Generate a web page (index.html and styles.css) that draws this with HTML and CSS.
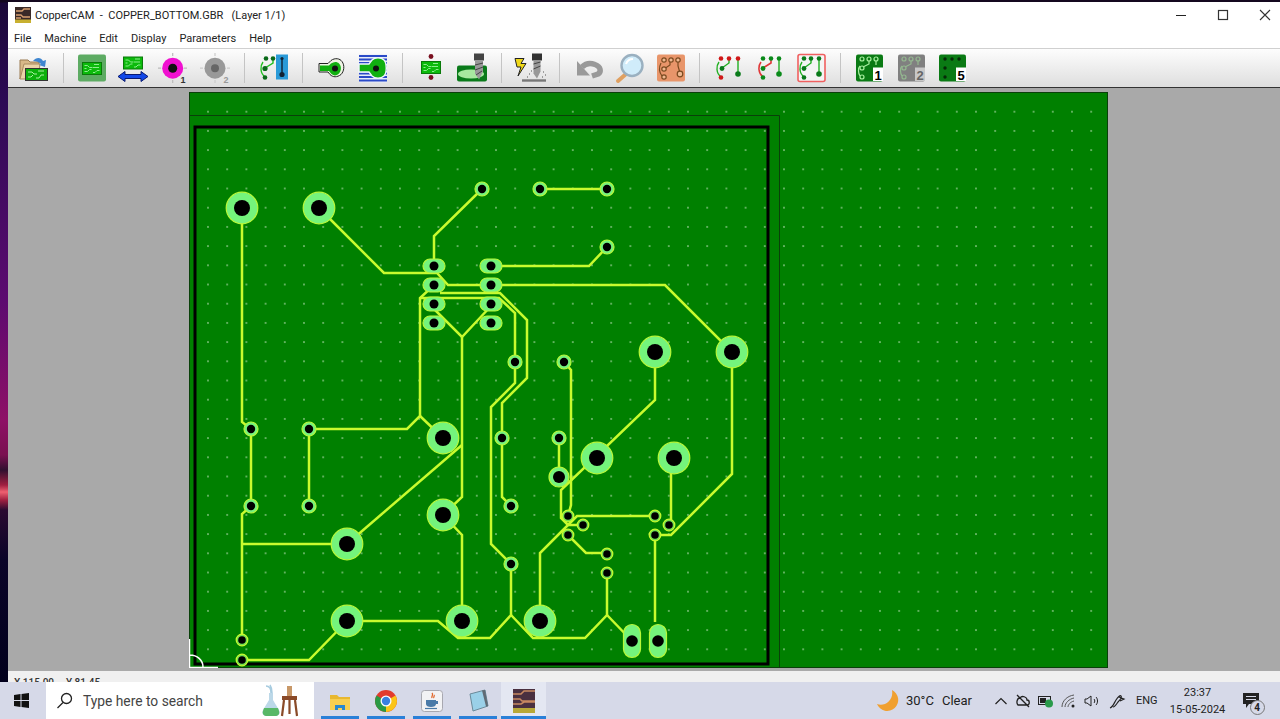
FILE: index.html
```html
<!DOCTYPE html>
<html lang="en">
<head>
<meta charset="UTF-8">
<title>CopperCAM - COPPER_BOTTOM.GBR</title>
<link rel="stylesheet" href="styles.css">
</head>
<body>

<svg class="defs" width="0" height="0">
    <defs>
        <g id="chip">
            <rect x="0.5" y="0.5" width="19" height="12" fill="#0cba0c" stroke="#0a7a0a"/>
            <path d="M2.500 3.500h3l2 2h3M12 2.500h5M2.500 6.500h2M2.500 9.500h3l2-2h2M11 5.500h6M11 10.500h2l2-2h2.500" fill="none" stroke="#8cec8c" stroke-width="1"/>
        </g>
        <g id="pad-l">
            <circle r="15.8" class="pad-ring"/>
            <circle r="8" class="pad-hole"/>
        </g>
        <g id="pad-s">
            <circle r="7" class="pad-ring"/>
            <circle r="4.2" class="pad-hole"/>
        </g>
        <g id="pad-m">
            <circle r="10" class="pad-ring"/>
            <circle r="6" class="pad-hole"/>
        </g>
        <g id="pad-xs">
            <circle r="5.800" class="pad-ring pad-thin"/>
            <circle r="3.800" class="pad-hole"/>
        </g>
        <g id="pad-h">
            <rect x="-11" y="-7" width="22" height="14" rx="7" class="pad-ring"/>
            <circle r="4.5" class="pad-hole"/>
        </g>
        <g id="pad-v">
            <rect x="-8.5" y="-16.5" width="17" height="33" rx="8.5" class="pad-ring"/>
            <circle r="5.8" class="pad-hole"/>
        </g>
        <g id="board-rings" fill="none" stroke="#a8f0a0" stroke-width="1.2">
            <circle cx="11" cy="9" r="2"/>
            <circle cx="18" cy="9" r="2"/>
            <circle cx="25" cy="9" r="2"/>
            <circle cx="11" cy="18" r="2"/>
            <circle cx="11" cy="27" r="2"/>
            <path d="M18 11v3l-6 3M25 11v4M9 16c-2 2-2 7 0 10"/>
        </g>
    </defs>
</svg>

<div class="desktop">
    <div class="window">
        <div class="titlebar">
            <svg class="app-icon" width="16" height="16" viewBox="0 0 16 16">
                <rect width="16" height="16" fill="#3a2a28"/>
                <path d="M1 4h6l2-2h6M1 8h5l2 2h7M1 11h5" stroke="#d8a070" stroke-width="1.3" fill="none"/>
                <rect y="12.5" width="16" height="3.5" fill="#c8b030"/>
            </svg>
            <span class="title-text">CopperCAM&nbsp; -&nbsp; COPPER_BOTTOM.GBR&nbsp;&nbsp; (Layer 1/1)</span>
            <div class="win-controls">
                <div class="win-btn"><svg width="12" height="12" viewBox="0 0 12 12"><path d="M1 6.500h10" stroke="#222" stroke-width="1"/></svg></div>
                <div class="win-btn"><svg width="12" height="12" viewBox="0 0 12 12"><rect x="1.500" y="1.500" width="9" height="9" fill="none" stroke="#333" stroke-width="1.2"/></svg></div>
                <div class="win-btn"><svg width="12" height="12" viewBox="0 0 12 12"><path d="M1 1l10 10M11 1L1 11" stroke="#333" stroke-width="1.1"/></svg></div>
            </div>
        </div>

        <div class="menubar">
            <span>File</span><span>Machine</span><span>Edit</span><span>Display</span><span>Parameters</span><span>Help</span>
        </div>

        <div class="toolbar">
            <div class="tool">
                <svg width="36" height="36" viewBox="0 0 36 36">
                    <path d="M4 29V10h8l2 2h9v5H9z" fill="#d8b888" stroke="#9a7a50"/>
                    <path d="M4 29l4-15h16l-2 15z" fill="#ecd4a8" stroke="#a88a60"/>
                    <path d="M17 11c3-4 8-4 10 0l3-1-1 7-6-2 2-1c-2-2-5-3-8-3z" fill="#3f86d0"/>
                    <rect x="9.500" y="18.500" width="22" height="12" fill="#0cb00c" stroke="#333"/>
                    <path d="M12 22h4l2 2h3M22 21h6M12 27h3l2-2M20 28h3l2-3h3" fill="none" stroke="#a8f0a0"/>
                </svg>
            </div>
            <div class="sep"></div>
            <div class="tool">
                <svg width="36" height="36" viewBox="0 0 36 36">
                    <rect x="4" y="4.500" width="28" height="27" rx="2" fill="#5dab63"/>
                    <use href="#chip" x="8" y="12"/>
                </svg>
            </div>
            <div class="tool">
                <svg width="36" height="36" viewBox="0 0 36 36">
                    <use href="#chip" x="8" y="6.500"/>
                    <path d="M3 26.500l7-5v3h16v-3l7 5-7 5v-3H10v3z" fill="#1248e8" stroke="#0a1a70"/>
                </svg>
            </div>
            <div class="tool">
                <svg width="36" height="36" viewBox="0 0 36 36">
                    <path d="M16.700 3v3M16.700 30v3M2 18.200h3M28 18.200h3" stroke="#bbb" stroke-width="1.2"/>
                    <circle cx="16.700" cy="18.200" r="10.500" fill="#f010d0"/>
                    <circle cx="16.700" cy="18.200" r="4.500" fill="#111"/>
                    <text x="27" y="33" class="num-sub">1</text>
                </svg>
            </div>
            <div class="tool">
                <svg width="36" height="36" viewBox="0 0 36 36">
                    <path d="M17 3v3M17 30v3M2 18.200h3M29 18.200h3" stroke="#ccc" stroke-width="1.2"/>
                    <circle cx="17" cy="18.200" r="10.500" fill="#999"/>
                    <circle cx="17" cy="18.200" r="4" fill="#666"/>
                    <text x="28" y="33" class="num-sub num-off">2</text>
                </svg>
            </div>
            <div class="sep"></div>
            <div class="tool">
                <svg width="36" height="36" viewBox="0 0 36 36">
                    <rect x="20" y="4.500" width="12" height="25" fill="#2a9ad8"/>
                    <path d="M26 8.500v16" stroke="#123" stroke-width="1.4"/>
                    <circle cx="26" cy="8.500" r="1.600" fill="#123"/>
                    <circle cx="26" cy="24.500" r="2.600" fill="#123"/>
                    <path d="M17 9v4l-8 5M7 12c-3 4-3 11 2 15" fill="none" stroke="#22c022" stroke-width="1.400"/>
                    <circle cx="10" cy="8.500" r="2.300" fill="#0a6a1a"/>
                    <circle cx="17" cy="8.500" r="2.300" fill="#0a6a1a"/>
                    <circle cx="9" cy="18.500" r="2.600" fill="#0a6a1a"/>
                    <circle cx="9" cy="27.500" r="2.300" fill="#0a6a1a"/>
                </svg>
            </div>
            <div class="sep"></div>
            <div class="tool">
                <svg width="36" height="36" viewBox="0 0 36 36">
                    <path d="M5 13.500h9l3-3c4-3 9-2 11 1 3 4 2 10-1 13-4 3-8 3-11 0l-2-2.500H5z" fill="#eef4e4" stroke="#222"/>
                    <path d="M6 15.500h9l2-2c3-2 6-2 8 0 3 3 2 8 0 10-3 3-6 2-8 0l-2-2.500H6z" fill="#10b010"/>
                    <circle cx="21" cy="18.500" r="3" fill="#111"/>
                </svg>
            </div>
            <div class="tool">
                <svg width="36" height="36" viewBox="0 0 36 36">
                    <rect x="4" y="4.500" width="28" height="28" fill="#e8ecf8"/>
                    <path d="M4 6h28M4 9.500h28M4 13h28M4 16.500h28M4 20h28M4 23.500h28M4 27h28M4 30.500h28" stroke="#2a4ac8" stroke-width="1.800"/>
                    <path d="M4 14h10l3-4c3-3 9-3 12 0 3 3 3 13 0 16-3 3-9 3-12 0l-3-4H4z" fill="#10b010" stroke="#f0f4ff" stroke-width="1.400"/>
                    <circle cx="21" cy="18.500" r="3" fill="#111"/>
                </svg>
            </div>
            <div class="sep"></div>
            <div class="tool">
                <svg width="36" height="36" viewBox="0 0 36 36">
                    <circle cx="18" cy="6.500" r="2.400" fill="#7a1020"/>
                    <circle cx="18" cy="27.500" r="2.400" fill="#7a1020"/>
                    <use href="#chip" x="8" y="11"/>
                </svg>
            </div>
            <div class="tool">
                <svg width="36" height="36" viewBox="0 0 36 36">
                    <rect x="3" y="15.500" width="30" height="16" rx="2" fill="#0a7a1a"/>
                    <ellipse cx="17" cy="24" rx="13" ry="4.500" fill="#a8e8a0"/>
                    <rect x="20" y="3.500" width="10" height="7" fill="#444"/>
                    <path d="M21 10.500h8v11l-4 8-4-6z" fill="#999"/>
                    <path d="M21 15l8-2M21 20l8-3M22 25l6-4" stroke="#444" stroke-width="1"/>
                </svg>
            </div>
            <div class="sep"></div>
            <div class="tool">
                <svg width="36" height="36" viewBox="0 0 36 36">
                    <path d="M3 8.500h9l-3 5h5L6 26l3-9H5z" fill="#f0d818" stroke="#222"/>
                    <rect x="20" y="3.500" width="10" height="7" fill="#333"/>
                    <path d="M21.500 10.500h7v11l-3.500 7-3.500-5z" fill="#999"/>
                    <path d="M21.500 14l7-2M21.500 19l7-3" stroke="#444"/>
                    <path d="M10 30.500h24" stroke="#777" stroke-width="2.400"/>
                    <path d="M17 24h1M15 27h1M31 22h1M33 25h1M30 27h1M19 21h1" stroke="#555"/>
                </svg>
            </div>
            <div class="sep"></div>
            <div class="tool">
                <svg width="36" height="36" viewBox="0 0 36 36">
                    <path d="M11 17C15 13 20 13 24 14.500C30 16.500 30.500 22 27 24L21 26" fill="none" stroke="#999" stroke-width="5.500"/>
                    <path d="M6 11V25.500H19z" fill="#999"/>
                </svg>
            </div>
            <div class="tool">
                <svg width="36" height="36" viewBox="0 0 36 36">
                    <path d="M14 24L6 31" stroke="#e0a060" stroke-width="4" stroke-linecap="round"/>
                    <circle cx="20" cy="15.500" r="10.500" fill="#d0ecfa" stroke="#9ab0c0" stroke-width="2.400"/>
                    <path d="M14 14c1-3 4-5 7-5" fill="none" stroke="#fff" stroke-width="2"/>
                </svg>
            </div>
            <div class="tool">
                <svg width="36" height="36" viewBox="0 0 36 36">
                    <rect x="4" y="4.500" width="28" height="27" rx="2" fill="#e8956a"/>
                    <path d="M17 12v3l-6 4M25 10v6l2 7M8 13c-2 4-2 9 1 13" fill="none" stroke="#7a4a20" stroke-width="1.200"/>
                    <g fill="#f0b890" stroke="#7a4a20" stroke-width="1.200">
                        <circle cx="11" cy="10" r="2.200"/>
                        <circle cx="18" cy="10" r="2.200"/>
                        <circle cx="25" cy="10" r="2.200"/>
                        <circle cx="11" cy="19" r="2.200"/>
                        <circle cx="11" cy="27" r="2.200"/>
                        <circle cx="27" cy="24" r="2.800"/>
                    </g>
                </svg>
            </div>
            <div class="sep"></div>
            <div class="tool">
                <svg width="36" height="36" viewBox="0 0 36 36">
                    <path d="M27 8.500V24M18 9v4l-7 5M8 12c-3 4-3 11 2 15" fill="none" stroke="#22b022" stroke-width="1.400"/>
                    <circle cx="10" cy="8.500" r="2.300" fill="#d01818"/>
                    <circle cx="18" cy="8.500" r="2.300" fill="#d01818"/>
                    <circle cx="27" cy="8.500" r="2.300" fill="#d01818"/>
                    <circle cx="11" cy="18.500" r="2.400" fill="#0a7a1a"/>
                    <circle cx="10" cy="27.500" r="2.300" fill="#d01818"/>
                    <circle cx="27" cy="24" r="2.800" fill="#0a7a1a"/>
                </svg>
            </div>
            <div class="tool">
                <svg width="36" height="36" viewBox="0 0 36 36">
                    <path d="M27 8.500V24" fill="none" stroke="#22b022" stroke-width="1.400"/>
                    <path d="M19 10v3l-8 5M9 12c-3 4-3 11 2 15" fill="none" stroke="#e03838" stroke-width="1.600"/>
                    <circle cx="11" cy="8.500" r="2.300" fill="#0a8a1a"/>
                    <circle cx="19" cy="8.500" r="2.300" fill="#0a8a1a"/>
                    <circle cx="27" cy="8.500" r="2.300" fill="#0a8a1a"/>
                    <circle cx="11" cy="18.500" r="2.400" fill="#0a8a1a"/>
                    <circle cx="11" cy="27.500" r="2.300" fill="#0a8a1a"/>
                    <circle cx="27" cy="24" r="2.800" fill="#0a8a1a"/>
                </svg>
            </div>
            <div class="tool">
                <svg width="36" height="36" viewBox="0 0 36 36">
                    <rect x="5" y="4.500" width="27" height="27" rx="2" fill="#f4f4f4" stroke="#f06060" stroke-width="1.600"/>
                    <path d="M26 8.500V24M18 9v4l-7 5M9 12c-3 4-3 11 2 15" fill="none" stroke="#22b022" stroke-width="1.400"/>
                    <circle cx="11" cy="8.500" r="2.300" fill="#0a7a1a"/>
                    <circle cx="18" cy="8.500" r="2.300" fill="#0a7a1a"/>
                    <circle cx="26" cy="8.500" r="2.300" fill="#0a7a1a"/>
                    <circle cx="11" cy="18.500" r="2.400" fill="#0a7a1a"/>
                    <circle cx="11" cy="27.500" r="2.300" fill="#0a7a1a"/>
                    <circle cx="26" cy="24" r="2.800" fill="#0a7a1a"/>
                </svg>
            </div>
            <div class="sep"></div>
            <div class="tool">
                <svg width="36" height="36" viewBox="0 0 36 36">
                    <rect x="5" y="4.500" width="27" height="27" rx="2" fill="#0a7a14"/>
                    <use href="#board-rings"/>
                    <rect x="22" y="17.500" width="10" height="13.500" fill="#fff"/>
                    <text x="27" y="29.500" class="num-box">1</text>
                </svg>
            </div>
            <div class="tool">
                <svg width="36" height="36" viewBox="0 0 36 36">
                    <rect x="5" y="4.500" width="27" height="27" rx="2" fill="#808080"/>
                    <use href="#board-rings" opacity="0.500"/>
                    <rect x="22" y="17.500" width="10" height="13.500" fill="#c8c8c8"/>
                    <text x="27" y="29.500" class="num-box num-box-off">2</text>
                </svg>
            </div>
            <div class="tool">
                <svg width="36" height="36" viewBox="0 0 36 36">
                    <rect x="5" y="4.500" width="27" height="27" rx="2" fill="#0a7a14"/>
                    <g fill="#062a08">
                        <circle cx="11" cy="9" r="1.700"/>
                        <circle cx="18" cy="9" r="1.700"/>
                        <circle cx="25" cy="9" r="1.700"/>
                        <circle cx="11" cy="18" r="1.700"/>
                        <circle cx="11" cy="27" r="1.700"/>
                    </g>
                    <rect x="22" y="17.500" width="10" height="13.500" fill="#fff"/>
                    <text x="27" y="29.500" class="num-box">5</text>
                </svg>
            </div>
        </div>

        <div class="canvas">
            <svg class="board" width="919" height="576" viewBox="189 92 919 576">
                <defs>
                    <pattern id="dots" patternUnits="userSpaceOnUse" x="198.400" y="102.100" width="19.200" height="19.200">
                        <circle cx="9.600" cy="9.600" r="0.700" fill="#f4fff0"/>
                    </pattern>
                </defs>
                <rect x="189.500" y="92.500" width="918" height="575" fill="#008000" stroke="#0a400a"/>
                <rect x="198" y="102" width="902" height="558" fill="url(#dots)"/>
                <path d="M189 115.500h590.500V668" fill="none" stroke="#0a400a"/>
                <rect x="195" y="127" width="573" height="537" fill="none" stroke="#000" stroke-width="3"/>
                <path d="M189.500 639v28.500H218M190 655c7 0 13 5 13 12" fill="none" stroke="#fff" stroke-width="1.500"/>

                <g class="traces">
                    <path d="M242 208V422l9 7v77l-9 8V640"/>
                    <path d="M242 544H347"/>
                    <path d="M347 544L462 445"/>
                    <path d="M462 337V497L443 515L462 535V621"/>
                    <path d="M319 208L384 273H437L448 285H665L732 352V474L671 535H655"/>
                    <path d="M655 535V622"/>
                    <path d="M482 189L434 236V266"/>
                    <path d="M540 189H607"/>
                    <path d="M491 266H589L607 247"/>
                    <path d="M434 285L420 298V416L407 429H309V506"/>
                    <path d="M420 416L443 438"/>
                    <path d="M420 298H499L515 313V383L491 407V544L511 564V615L490 638H458L438 621H347"/>
                    <path d="M440 293H500L527 320V378L502 403V497L511 506"/>
                    <path d="M424 299L462 337L491 306"/>
                    <path d="M511 615L533 638H585L607 615V573"/>
                    <path d="M607 615L632 641"/>
                    <path d="M540 621V553L563 530L577 516H655"/>
                    <path d="M655 352V400L561 490V518L568 525H583"/>
                    <path d="M559 438V477"/>
                    <path d="M564 362L571 370V505L568 516"/>
                    <path d="M568 535L586 553H607"/>
                    <path d="M674 458H671V525"/>
                    <path d="M242 660H309L347 621"/>
                </g>

                <use href="#pad-l" x="242" y="208"/>
                <use href="#pad-l" x="319" y="208"/>
                <use href="#pad-l" x="655" y="352"/>
                <use href="#pad-l" x="732" y="352"/>
                <use href="#pad-l" x="443" y="438"/>
                <use href="#pad-l" x="597" y="458"/>
                <use href="#pad-l" x="674" y="458"/>
                <use href="#pad-l" x="443" y="515"/>
                <use href="#pad-l" x="347" y="544"/>
                <use href="#pad-l" x="347" y="621"/>
                <use href="#pad-l" x="462" y="621"/>
                <use href="#pad-l" x="540" y="621"/>
                <use href="#pad-m" x="559" y="477"/>

                <use href="#pad-s" x="482" y="189"/>
                <use href="#pad-s" x="540" y="189"/>
                <use href="#pad-s" x="607" y="189"/>
                <use href="#pad-s" x="607" y="247"/>
                <use href="#pad-s" x="251" y="429"/>
                <use href="#pad-s" x="309" y="429"/>
                <use href="#pad-s" x="251" y="506"/>
                <use href="#pad-s" x="309" y="506"/>
                <use href="#pad-s" x="515" y="362"/>
                <use href="#pad-s" x="564" y="362"/>
                <use href="#pad-s" x="502" y="438"/>
                <use href="#pad-s" x="559" y="438"/>
                <use href="#pad-s" x="511" y="506"/>
                <use href="#pad-s" x="511" y="564"/>

                <use href="#pad-xs" x="568" y="516"/>
                <use href="#pad-xs" x="583" y="525"/>
                <use href="#pad-xs" x="568" y="535"/>
                <use href="#pad-xs" x="655" y="516"/>
                <use href="#pad-xs" x="655" y="535"/>
                <use href="#pad-xs" x="669" y="525"/>
                <use href="#pad-xs" x="607" y="554"/>
                <use href="#pad-xs" x="607" y="573"/>
                <use href="#pad-xs" x="242" y="640"/>
                <use href="#pad-xs" x="242" y="660"/>

                <use href="#pad-h" x="434" y="266"/>
                <use href="#pad-h" x="491" y="266"/>
                <use href="#pad-h" x="434" y="285"/>
                <use href="#pad-h" x="491" y="285"/>
                <use href="#pad-h" x="434" y="304"/>
                <use href="#pad-h" x="491" y="304"/>
                <use href="#pad-h" x="434" y="323"/>
                <use href="#pad-h" x="491" y="323"/>

                <use href="#pad-v" x="632" y="641"/>
                <use href="#pad-v" x="658" y="641"/>
            </svg>
        </div>

        <div class="statusbar"><span>X 115.00</span><span>Y 81.45</span></div>
    </div>
</div>

<div class="taskbar">
    <div class="start">
        <svg width="15" height="15" viewBox="0 0 15 15" fill="#111">
            <path d="M0 2l6.500-1v6H0zM7.500 1L15 0v7H7.500zM0 8h6.500v6L0 13zM7.500 8H15v7l-7.500-1z"/>
        </svg>
    </div>
    <div class="search">
        <svg width="17" height="17" viewBox="0 0 17 17" fill="none" stroke="#222" stroke-width="1.300">
            <circle cx="10.500" cy="6.500" r="5"/>
            <path d="M7 10.500L1.500 16"/>
        </svg>
        <span class="search-text">Type here to search</span>
        <svg class="search-art" width="42" height="36" viewBox="0 0 42 36">
            <path d="M8 3c3 0 5 2 5 7M12 2c2 3 2 5 2 8" fill="none" stroke="#a8cce0" stroke-width="1.500"/>
            <path d="M11 10h4v7l6 10c2 4-1 6-4 6H9c-3 0-6-2-4-6l6-10z" fill="#bcd8e8"/>
            <path d="M6 25h14l1 3c1 3-1 5-4 5H9c-3 0-5-2-4-5z" fill="#58b868"/>
            <rect x="29" y="3" width="5" height="10" fill="#c89868"/>
            <rect x="24" y="13" width="15" height="4" fill="#8a4a28"/>
            <path d="M26 17l-2 16M37 17l2 16M31.500 17v14" stroke="#8a4a28" stroke-width="2.200"/>
        </svg>
    </div>
    <div class="task-app">
        <svg width="22" height="22" viewBox="0 0 22 22">
            <path d="M1 5h7l2 2h11v5H1z" fill="#e8b830"/>
            <rect x="1" y="9" width="20" height="11" fill="#f8cf50"/>
            <path d="M6 20v-5h10v5h-3v-2H9v2z" fill="#2a88d0"/>
        </svg>
    </div>
    <div class="task-app">
        <svg width="24" height="24" viewBox="0 0 24 24">
            <circle cx="12" cy="12" r="11" fill="#e23b2e"/>
            <path d="M12 12L2.500 6.500A11 11 0 0 0 12 23z" fill="#2a9a44"/>
            <path d="M12 12V23A11 11 0 0 0 21.500 6.500z" fill="#fbc518"/>
            <circle cx="12" cy="12" r="5.500" fill="#fff"/>
            <circle cx="12" cy="12" r="4.200" fill="#3a80e0"/>
        </svg>
    </div>
    <div class="task-app">
        <svg width="24" height="24" viewBox="0 0 24 24">
            <rect x="1.500" y="1.500" width="21" height="21" rx="3" fill="#f2f2f4" stroke="#a8a8b0"/>
            <path d="M12 4c2 2-1 3 0 5M14 6c1 1-1 2 0 3" fill="none" stroke="#e0662a" stroke-width="1.300"/>
            <path d="M6 11h10v4c0 2-2 3-5 3s-5-1-5-3zM16 12h2v3h-2" fill="#4a7aa8"/>
            <path d="M5 19.500h12" stroke="#4a7aa8" stroke-width="1.200"/>
        </svg>
    </div>
    <div class="task-app">
        <svg width="22" height="24" viewBox="0 0 22 24">
            <path d="M3 5l15-4 3 16-15 5z" fill="#9ad0e8" stroke="#6a8a9a"/>
            <path d="M15 1.500l3-.5 3 16-2 .6z" fill="#606a74"/>
        </svg>
    </div>
    <div class="task-app task-active">
        <svg width="22" height="24" viewBox="0 0 22 24">
            <rect width="22" height="24" fill="#4a3040"/>
            <path d="M0 5h8l3-3h11M0 10h7l2 2h13M0 15h8l3-2h11" stroke="#c88860" stroke-width="1.600" fill="none"/>
            <rect y="19" width="22" height="5" fill="#b8a838"/>
        </svg>
    </div>

    <div class="tray">
        <svg class="moon" width="24" height="24" viewBox="0 0 24 24">
            <path d="M16 1a11 11 0 1 1-15 14c7 3 17-3 15-14z" fill="#f0a030"/>
        </svg>
        <span class="weather">30°C</span>
        <span class="weather clear">Clear</span>
        <div class="tray-icons">
            <svg width="14" height="10" viewBox="0 0 14 10" fill="none" stroke="#222" stroke-width="1.200"><path d="M1.500 8L7 2.500 12.500 8"/></svg>
            <svg width="16" height="14" viewBox="0 0 16 14" fill="none" stroke="#222" stroke-width="1.300"><path d="M3 11h9c3 0 3-5 0-5 0-3-5-5-7-2-3 0-4 5-2 7zM2 1l12 12"/></svg>
            <svg width="16" height="14" viewBox="0 0 16 14"><rect x="0.500" y="2.500" width="12" height="8" fill="none" stroke="#222"/><rect x="2" y="4" width="6" height="5" fill="#222"/><circle cx="11" cy="9.500" r="4" fill="#2a9a4a"/></svg>
            <svg width="16" height="14" viewBox="0 0 16 14" fill="none" stroke="#555"><path d="M1 13c0-6 5-11 12-12M4 13c0-4 4-8 9-9M7 13c0-2 2-5 6-6"/><circle cx="12" cy="12" r="1.500" fill="#222" stroke="none"/></svg>
            <svg width="16" height="14" viewBox="0 0 16 14" fill="none" stroke="#222"><path d="M1 5h2l4-3v10l-4-3H1zM10 5c1 1 1 3 0 4M12 3c2 2 2 6 0 8"/></svg>
            <svg class="pen" width="18" height="16" viewBox="0 0 18 16" fill="none" stroke="#222" stroke-width="1.200"><path d="M1 15c3-1 4-5 6-8 2-3 4-5 5-4s-1 4-3 6c-2 3-4 5-5 5M10 4l5 2-4 2"/></svg>
        </div>
        <span class="lang">ENG</span>
        <div class="clock"><span>23:37</span><span>15-05-2024</span></div>
        <div class="notify">
            <svg width="16" height="15" viewBox="0 0 16 15"><path d="M0 0h16v11H6l-3 4v-4H0z" fill="#222"/><path d="M3 3.500h10M3 6.500h10" stroke="#d6d9e8"/></svg>
            <span class="badge">4</span>
        </div>
    </div>
</div>

</body>
</html>
```

FILE: styles.css
```css
* {
    box-sizing: border-box;
}

html, body {
    margin: 0;
    padding: 0;
}

body {
    width: 1280px;
    height: 719px;
    overflow: hidden;
    display: flex;
    flex-direction: column;
    font-family: Roboto, "Noto Sans", sans-serif;
    color: #222;
}

.defs {
    position: absolute;
}

.desktop {
    height: 682px;
    padding: 2px 0 0 8px;
    background: linear-gradient(to bottom,
        #14081f 0, #14081f 2px, #1a0838 3px, #2c0a55 100px, #5c0a70 300px, #8e1066 420px,
        #7a1050 455px, #301030 470px, #a02040 485px, #f06070 492px, #a02040 500px,
        #2a0a30 510px, #0a0428 560px, #02001c 682px);
}

.window {
    height: 680px;
    display: flex;
    flex-direction: column;
    background: #f0f0f0;
}

.titlebar {
    height: 26px;
    display: flex;
    align-items: center;
    padding-left: 7px;
    background: #fff;
    font-size: 11px;
}

.app-icon {
    margin-right: 4px;
}

.win-controls {
    margin-left: auto;
    margin-right: -6px;
    display: flex;
}

.win-btn {
    width: 42px;
    height: 26px;
    display: flex;
    align-items: center;
    justify-content: center;
}

.menubar {
    height: 20px;
    display: flex;
    align-items: center;
    gap: 13px;
    padding-left: 6px;
    background: #fff;
    font-size: 11px;
}

.toolbar {
    height: 40px;
    display: flex;
    align-items: center;
    padding-left: 5.500px;
    background: linear-gradient(to bottom, #fdfdfd, #dedede);
    border-top: 1px solid #d0d0d0;
    border-bottom: 1px solid #333;
}

.tool {
    width: 41.150px;
    height: 36px;
    display: flex;
    align-items: center;
    justify-content: center;
}

.tool svg {
    display: block;
}

.sep {
    width: 1px;
    height: 30px;
    margin: 0 8px;
    background: #c4c4c4;
}

.num-sub {
    font-family: "Liberation Sans", sans-serif;
    font-size: 9px;
    font-weight: bold;
    fill: #333;
    text-anchor: middle;
}

.num-off {
    fill: #999;
}

.num-box {
    font-family: "Liberation Sans", sans-serif;
    font-size: 13px;
    font-weight: bold;
    fill: #000;
    text-anchor: middle;
}

.num-box-off {
    fill: #666;
}

.canvas {
    flex: 1;
    min-height: 0;
    padding: 4px 0 0 181px;
    background: #a9a9a9;
    overflow: hidden;
}

.board {
    display: block;
}

.traces path {
    fill: none;
    stroke: #c8fb2e;
    stroke-width: 2.500;
}

.pad-ring {
    fill: #74f47c;
    stroke: #b8f838;
    stroke-width: 1.200;
}

.pad-thin {
    fill: #70e050;
    stroke: #c8fb2e;
}

.pad-hole {
    fill: #000;
}

.statusbar {
    height: 12px;
    padding: 6px 0 0 6px;
    display: flex;
    gap: 12px;
    font-size: 10px;
    line-height: 12px;
    font-weight: 500;
    color: #333;
    background: #f0f0f0;
    border-top: 1px solid #aaa;
    overflow: hidden;
}

.taskbar {
    height: 37px;
    display: flex;
    align-items: stretch;
    background: #d6d9e8;
    font-size: 12px;
}

.start {
    width: 46px;
    display: flex;
    align-items: center;
    justify-content: center;
    padding-right: 3px;
}

.search {
    width: 268px;
    display: flex;
    align-items: center;
    background: #fff;
    padding-left: 10px;
}

.search-text {
    margin-left: 10px;
    font-size: 13.800px;
    color: #444;
}

.search-art {
    margin-left: auto;
    margin-right: 14px;
}

.task-app {
    width: 38px;
    margin-left: 8px;
    display: flex;
    align-items: center;
    justify-content: center;
    border-bottom: 3px solid #2a80d8;
    padding-top: 3px;
}

.task-app:nth-child(3) {
    margin-left: 7px;
}

.task-active {
    width: 45px;
    margin-left: 4px;
    background: #e4e7f2;
}

.tray {
    flex: 1;
    display: flex;
    align-items: center;
    padding-left: 330px;
    font-size: 11px;
}

.moon {
    flex: none;
}

.weather {
    margin-left: 6px;
    font-size: 13px;
}

.clear {
    margin-left: 8px;
}

.tray-icons {
    display: flex;
    align-items: center;
    gap: 7px;
    margin-left: 22px;
}

.pen {
    margin-left: 2px;
}

.lang {
    margin-left: 9px;
}

.clock {
    width: 72px;
    margin-left: 4px;
    display: flex;
    flex-direction: column;
    align-items: center;
    line-height: 17px;
}

.notify {
    position: relative;
    margin-left: 9px;
    display: flex;
}

.badge {
    position: absolute;
    left: 7px;
    top: 7px;
    width: 15px;
    height: 15px;
    border-radius: 50%;
    border: 1px solid #777;
    background: #d6d9e8;
    font-size: 10px;
    font-weight: 700;
    line-height: 13px;
    text-align: center;
}
```
